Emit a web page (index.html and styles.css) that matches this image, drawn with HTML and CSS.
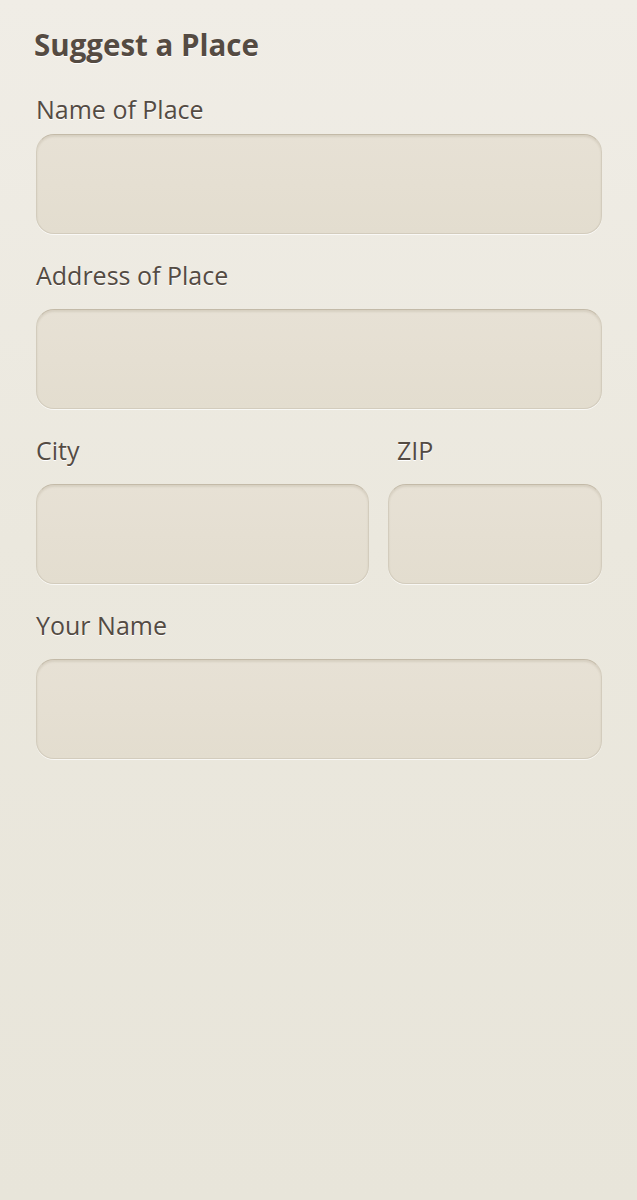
FILE: index.html
```html
<!DOCTYPE html>
<html lang="en">
<head>
<meta charset="utf-8">
<title>Suggest a Place</title>
<link rel="stylesheet" href="styles.css">
</head>
<body>
<main class="page">
  <h1 class="title">Suggest a Place</h1>
  <form class="form">
    <div class="field field--first">
      <label class="label" for="name">Name of Place</label>
      <input class="input" id="name" type="text">
    </div>
    <div class="field">
      <label class="label" for="address">Address of Place</label>
      <input class="input" id="address" type="text">
    </div>
    <div class="row">
      <div class="field field--city">
        <label class="label" for="city">City</label>
        <input class="input" id="city" type="text">
      </div>
      <div class="field field--zip">
        <label class="label label--zip" for="zip">ZIP</label>
        <input class="input" id="zip" type="text">
      </div>
    </div>
    <div class="field">
      <label class="label" for="yourname">Your Name</label>
      <input class="input" id="yourname" type="text">
    </div>
  </form>
</main>
</body>
</html>
```

FILE: styles.css
```css
html, body {
  margin: 0;
  padding: 0;
}

body {
  min-height: 1200px;
  background: linear-gradient(to bottom, #f0ede6 0%, #ebe8de 45%, #e8e5da 100%);
  font-family: "Open Sans", "DejaVu Sans", sans-serif;
  color: #544b43;
}

.page {
  padding: 25px 35px 0 36px;
}

.title {
  margin: 0 0 0 -2px;
  font-size: 29.5px;
  line-height: 40px;
  font-weight: 700;
  color: #554b42;
  text-shadow: 0 1px 0 #ffffff;
}

.form {
  display: flex;
  flex-direction: column;
  gap: 25px;
  margin-top: 28px;
}

.field {
  display: flex;
  flex-direction: column;
  gap: 18px;
}

.field--first {
  gap: 9px;
}

.label {
  font-size: 25px;
  line-height: 32px;
  font-weight: 400;
  color: #544b43;
  text-shadow: 0 1px 0 #ffffff;
}

.label--zip {
  margin-left: 9px;
}

.input {
  box-sizing: border-box;
  width: 100%;
  height: 100px;
  margin: 0;
  border: 1px solid #d3ccbd;
  border-top-color: #c3baa8;
  border-radius: 18px;
  background: linear-gradient(to bottom, #e7e1d5, #e3ddcf);
  box-shadow: inset 0 2px 2px rgba(120, 105, 80, 0.14), 0 1px 0 rgba(255, 255, 255, 0.7);
  font: inherit;
  outline: none;
}

.row {
  display: flex;
  gap: 19px;
}

.field--city {
  width: 333px;
  flex: none;
}

.field--zip {
  flex: 1;
}
```
